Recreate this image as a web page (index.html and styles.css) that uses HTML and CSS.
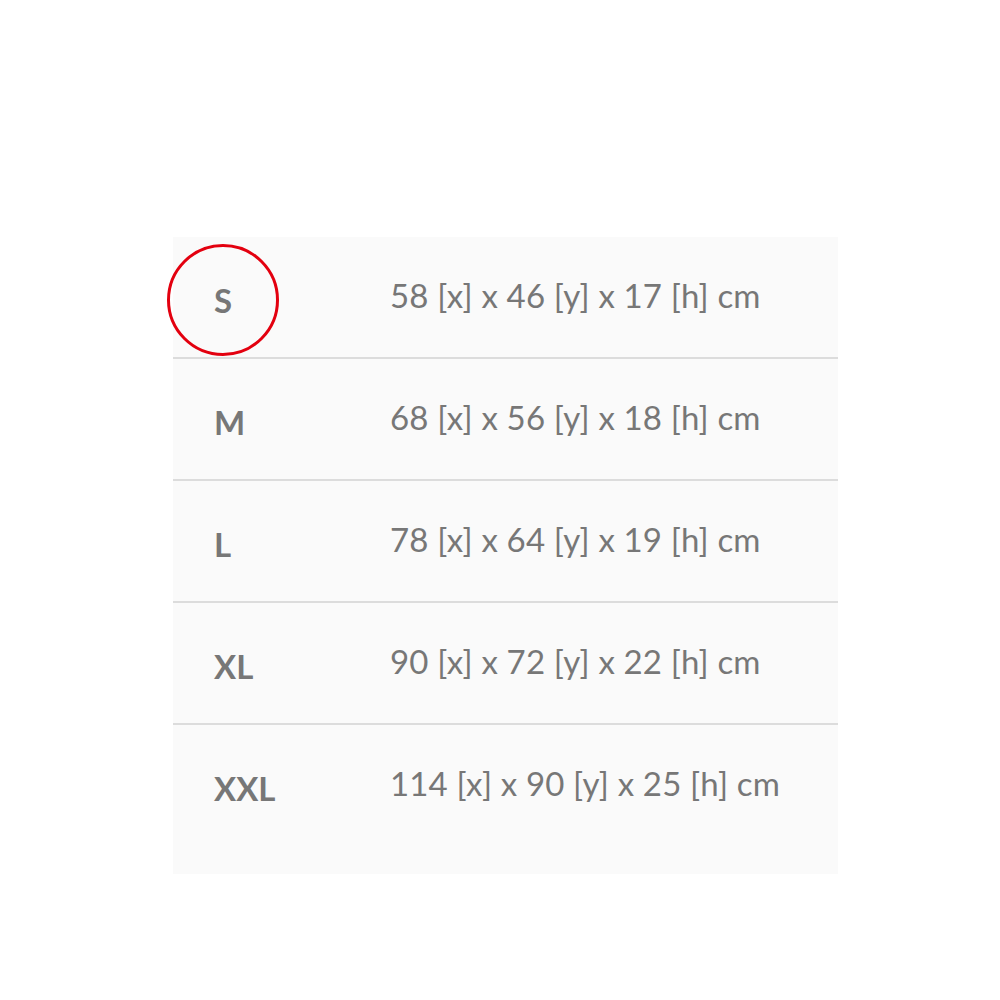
FILE: index.html
```html
<!DOCTYPE html>
<html lang="de">
<head>
<meta charset="UTF-8">
<meta name="viewport" content="width=device-width, initial-scale=1.0">
<title>Größentabelle</title>
<link rel="stylesheet" href="styles.css">
</head>
<body>

<div class="size-table">
  <div class="size-row">
    <span class="size-label">S</span>
    <span class="size-value">58 [x] x 46 [y] x 17 [h] cm</span>
    <div class="size-mark"></div>
  </div>
  <div class="size-row">
    <span class="size-label">M</span>
    <span class="size-value">68 [x] x 56 [y] x 18 [h] cm</span>
  </div>
  <div class="size-row">
    <span class="size-label">L</span>
    <span class="size-value">78 [x] x 64 [y] x 19 [h] cm</span>
  </div>
  <div class="size-row">
    <span class="size-label">XL</span>
    <span class="size-value">90 [x] x 72 [y] x 22 [h] cm</span>
  </div>
  <div class="size-row">
    <span class="size-label">XXL</span>
    <span class="size-value">114 [x] x 90 [y] x 25 [h] cm</span>
  </div>
</div>

</body>
</html>
```

FILE: styles.css
```css
body {
  font-family: Lato, "Open Sans", sans-serif;
  margin: 0;
  background-color: #fff;
}
.size-table {
  width: 665px;
  margin: 237px 0 0 173px;
  padding-bottom: 29px;
  background-color: #fafafa;
}
.size-row {
  position: relative;
  display: flex;
  align-items: flex-start;
  height: 120px;
  border-bottom: 2px solid #dcdcdc;
  color: #777;
  font-size: 33px;
  line-height: 40px;
}
.size-row:last-child {
  border-bottom: none;
}
.size-label {
  width: 176px;
  padding: 43px 0 0 41px;
  font-weight: bold;
}
.size-value {
  padding-top: 38px;
  letter-spacing: 0.15px;
}
.size-mark {
  position: absolute;
  left: -6px;
  top: 7px;
  width: 106px;
  height: 106px;
  border: 3.5px solid #e3000f;
  border-radius: 50%;
}
```
